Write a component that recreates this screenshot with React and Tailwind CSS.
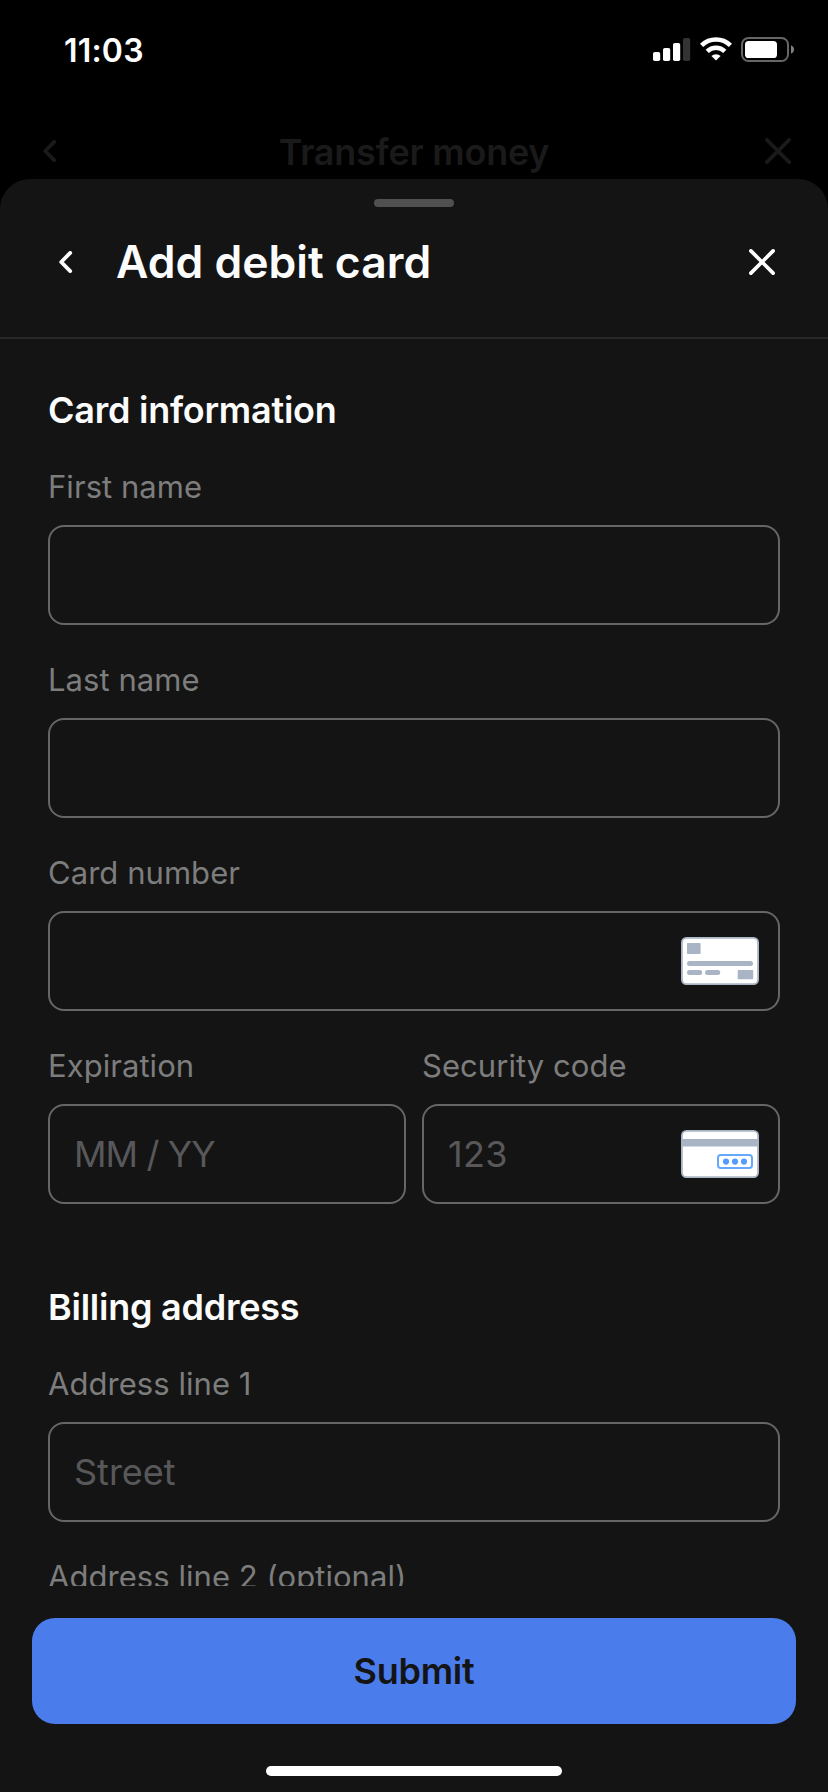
function Chevron({ className }) {
  return (
    <svg className={className} width="14" height="22" viewBox="0 0 14 22" fill="none" stroke="currentColor" strokeWidth="3.8" strokeLinecap="round" strokeLinejoin="round">
      <path d="M11.2 1.9 2.2 11l9 9.1" />
    </svg>
  );
}

function Close({ className }) {
  return (
    <svg className={className} width="26" height="26" viewBox="0 0 26 26" fill="none" stroke="currentColor" strokeWidth="3.7" strokeLinecap="round">
      <path d="M1.9 1.9l22.2 22.2M24.1 1.9 1.9 24.1" />
    </svg>
  );
}

function Signal() {
  return (
    <svg width="38" height="24" viewBox="0 0 38 24" fill="#fff">
      <rect x="0" y="14" width="7.2" height="9" rx="1.8" />
      <rect x="10" y="10" width="7.2" height="13" rx="1.8" />
      <rect x="20" y="5" width="7.2" height="18" rx="1.8" />
      <rect x="30" y="0" width="7.2" height="23" rx="1.8" fill="#333" />
    </svg>
  );
}

function Wifi() {
  return (
    <svg width="32" height="24" viewBox="0 0 32 24" fill="none" stroke="#fff">
      <path d="M1.6 8.4a20.7 20.7 0 0 1 28.8 0" strokeWidth="4.6" />
      <path d="M7.2 14.4a12.6 12.6 0 0 1 17.6 0" strokeWidth="4.6" />
      <path d="M16 23.6l-4.6-4.5a6.6 6.6 0 0 1 9.2 0z" fill="#fff" stroke="none" />
    </svg>
  );
}

function Battery() {
  return (
    <svg width="53" height="25" viewBox="0 0 53 25">
      <rect x="1" y="1" width="46" height="23" rx="6.5" fill="none" stroke="#666" strokeWidth="2" />
      <rect x="4" y="4" width="32" height="17" rx="3.6" fill="#fff" />
      <path d="M50 8.3c1.9.8 3 2.3 3 4.2s-1.1 3.4-3 4.2z" fill="#808080" />
    </svg>
  );
}

function CardFront() {
  return (
    <svg width="78" height="48" viewBox="0 0 78 48" fill="#a9b5c4">
      <rect x="0.9" y="0.9" width="76.2" height="46.2" rx="4.5" fill="#fff" stroke="#a9b5c4" strokeWidth="1.8" />
      <rect x="6" y="6" width="13.6" height="11" rx="0.8" />
      <rect x="6" y="24" width="66" height="5" rx="2.5" />
      <rect x="6" y="33" width="15.2" height="5" rx="2.5" />
      <rect x="24" y="33" width="15.2" height="5" rx="2.5" />
      <rect x="56.7" y="33" width="15.5" height="9.2" rx="0.8" />
    </svg>
  );
}

function CardBack() {
  return (
    <svg width="78" height="48" viewBox="0 0 78 48">
      <rect x="0.9" y="0.9" width="76.2" height="46.2" rx="4.5" fill="#fff" stroke="#a9b5c4" strokeWidth="1.8" />
      <rect x="1" y="9" width="76" height="7.5" fill="#a9b5c4" />
      <rect x="37" y="25" width="34" height="13" rx="2.8" fill="#fff" stroke="#67a8ff" strokeWidth="2" />
      <circle cx="45" cy="31.6" r="3.1" fill="#559cff" />
      <circle cx="54" cy="31.6" r="3.1" fill="#559cff" />
      <circle cx="63" cy="31.6" r="3.1" fill="#559cff" />
    </svg>
  );
}

function Field({ label, placeholder, tracking = "tracking-normal", icon }) {
  return (
    <label className="flex flex-1 flex-col">
      <span className="text-[31px] leading-[40px] tracking-[0.05px] text-[#7d7d7d]">{label}</span>
      <span className="mt-[18px] flex h-[100px] items-center justify-between rounded-2xl border-2 border-[#666] pr-[19px] pl-6">
        <span className={`text-[36px] leading-[44px] text-[#58585a] ${tracking}`}>{placeholder}</span>
        {icon}
      </span>
    </label>
  );
}

function Heading({ children }) {
  return <h2 className="text-[36px] leading-[44px] font-semibold tracking-[-0.25px] text-[#fcfcfc]">{children}</h2>;
}

export default function App() {
  return (
    <div className="flex h-[1792px] w-[828px] flex-col overflow-hidden bg-black font-['Inter',sans-serif]">
      <div className="flex h-[100px] shrink-0 items-start justify-between pt-[37px] pr-[34px] pl-16">
        <div className="-mt-[6px] text-[32px] leading-[40px] font-semibold tracking-[0.2px] text-white">11:03</div>
        <div className="flex items-start">
          <div className="mt-px mr-[9px]"><Signal /></div>
          <div className="mr-[9px]"><Wifi /></div>
          <Battery />
        </div>
      </div>
      <div className="flex h-[79px] shrink-0 items-start justify-between pt-[30px] pr-[37px] pl-[43px] text-[#1a1a1a]">
        <Chevron className="mt-[10px]" />
        <div className="ml-[6px] text-[36px] leading-[44px] font-semibold tracking-[-0.25px]">Transfer money</div>
        <Close className="mt-2" />
      </div>
      <div className="flex min-h-0 flex-1 flex-col rounded-t-[30px] bg-[#141414]">
        <div className="flex h-[160px] shrink-0 flex-col border-b-2 border-[#282828] pt-5">
          <div className="h-2 w-20 self-center rounded-full bg-[#505050]" />
          <div className="mt-[29px] flex h-[52px] items-center pr-[53px] pl-[59px] text-[#fcfcfc]">
            <Chevron />
            <h1 className="ml-[43px] flex-1 text-[44.5px] leading-[52px] font-semibold">Add debit card</h1>
            <Close className="text-white" />
          </div>
        </div>
        <div className="flex h-[1247px] shrink-0 flex-col overflow-hidden px-12 pt-[49px]">
          <Heading>Card information</Heading>
          <div className="mt-[35px] flex flex-col gap-[35px]">
            <Field label="First name" />
            <Field label="Last name" />
            <Field label="Card number" icon={<CardFront />} />
            <div className="flex gap-4">
              <Field label="Expiration" placeholder="MM / YY" tracking="tracking-[-0.9px]" />
              <Field label="Security code" placeholder="123" tracking="tracking-[0.3px]" icon={<CardBack />} />
            </div>
          </div>
          <div className="mt-[81px]"><Heading>Billing address</Heading></div>
          <div className="mt-[35px] flex flex-col gap-[35px]">
            <Field label="Address line 1" placeholder="Street" />
            <Field label="Address line 2 (optional)" />
          </div>
        </div>
        <div className="flex flex-col items-center px-8 pt-8">
          <button className="h-[106px] w-full rounded-[23px] bg-[#4a7deb] text-[36px] leading-[44px] font-semibold tracking-[-0.25px] text-[#141414]">Submit</button>
          <div className="mt-[42px] h-[10px] w-[296px] rounded-full bg-white" />
        </div>
      </div>
    </div>
  );
}
